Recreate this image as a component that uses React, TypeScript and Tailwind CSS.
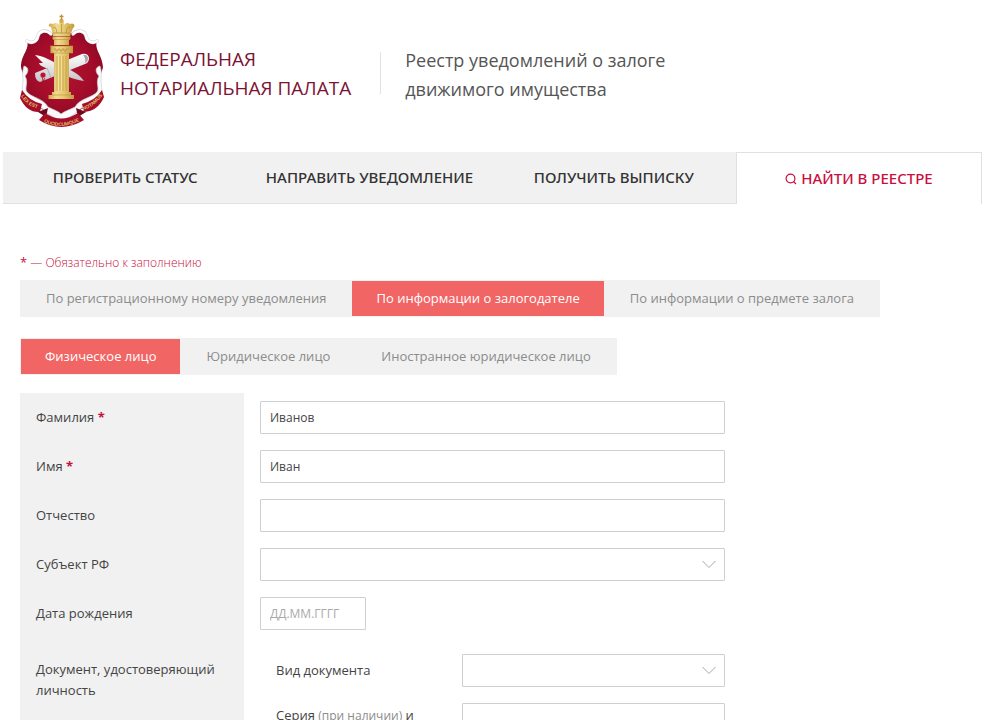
import React from "react";

function Emblem() {
  return (
    <svg viewBox="19 13 88 116" className="h-[116px] w-[88px] shrink-0" role="img" aria-label="Герб">
      <defs>
        <radialGradient id="field" cx="50%" cy="45%" r="60%">
          <stop offset="0" stopColor="#b3152f" />
          <stop offset="0.6" stopColor="#a30c2a" />
          <stop offset="1" stopColor="#850923" />
        </radialGradient>
        <linearGradient id="gold" x1="0" x2="1" y1="0" y2="0">
          <stop offset="0" stopColor="#cfa648" />
          <stop offset="0.3" stopColor="#f0dc90" />
          <stop offset="0.6" stopColor="#e5c96f" />
          <stop offset="1" stopColor="#c29840" />
        </linearGradient>
        <linearGradient id="silver" x1="0" x2="0" y1="0" y2="1">
          <stop offset="0" stopColor="#ffffff" />
          <stop offset="1" stopColor="#c4c4c8" />
        </linearGradient>
        <path id="ribbonLeft" d="M21 96 Q28 108 42 109" />
        <path id="ribbonMid" d="M42 121 Q61 132 83 119" />
        <path id="ribbonRight" d="M83 110 Q95 107 104 93" />
      </defs>
      <path
        d="M50 33 C44 29 38 31 37 36 C36 42 31 44 27 40 C30 50 21 54 21 67 C22 73 25 76 25 82 C26 88 23 92 24 97 C30 106 41 107 46 112 C52 118 56 119 61 119 C67 119 71 117 77 112 C83 107 94 105 100 96 C101 91 98 88 99 82 C99 76 102 73 103 67 C102 54 94 50 97 40 C94 45 88 43 87 36 C86 31 80 29 74 33 Z"
        fill="url(#field)"
      />
      <g fill="none" strokeLinecap="round">
        <path d="M51 34 C46 29 39 31 38 36 C37 42 31 44 27 41 M73 34 C78 29 85 31 86 36 C87 42 93 44 97 41" stroke="#cfcfd3" strokeWidth="3.400" />
        <path d="M51 34 C46 29 39 31 38 36 C37 42 31 44 27 41 M73 34 C78 29 85 31 86 36 C87 42 93 44 97 41" stroke="#fff" strokeWidth="2.400" />
      </g>
      <path
        d="M24 66 C29 67 29 72 25 76 C29 83 24 88 27 92 C32 98 43 98 48 107 C54 110 58 111 61 114 C65 111 69 110 75 107 C80 98 92 98 97 92 C100 88 95 83 99 76 C95 72 95 67 100 66 C102 72 101 76 101 82 C102 90 103 95 96 101 C88 106 82 106 77 112 C69 119 67 117 61 121 C56 117 53 119 46 112 C41 106 35 106 28 101 C21 95 22 90 23 82 C23 76 22 72 24 66 Z"
        fill="#fafafa"
        stroke="#cfcfd2"
        strokeWidth="0.7"
      />
      <path d="M35 55 C43 56 51 60 61 66 C72 70 79 74 84 81 C72 79 65 76 56 70 C47 69 39 66 39 63 L43 63 Z" fill="url(#silver)" />
      <path d="M35 73 L82 54 Q88 53 89 58 Q89 63 85 64 L40 82 Q35 81 35 73 Z" fill="url(#silver)" />
      <path d="M83 55 Q86 58 85 63 Q88 62 88 58 Q87 54 83 55" fill="#a5a5aa" />
      <path d="M47 68 L51 78" stroke="#a6a6ac" strokeWidth="0.8" />
      <path d="M42 76 L43 81 L45 78" fill="none" stroke="#a30c2a" strokeWidth="0.8" />
      <circle cx="43" cy="75" r="2.6" fill="#c41236" />
      <path d="M51 27 C47 26 49 22 53 24 C55 22 58 23 59 25 C59 22 60 21 61.500 20 C63 21 64 22 64 25 C65 23 68 22 70 24 C74 22 76 26 73 28 L70 36 H53 Z" fill="url(#gold)" />
      <circle cx="61.500" cy="21" r="2.200" fill="#d5ac48" />
      <path d="M61.500 14.500 V20 M59.500 16.500 H63.500" stroke="#bd933a" strokeWidth="1.400" />
      <path d="M53 28 Q56 25 57 33 M61.500 24 V33 M70 28 Q67 25 66 33 M53 33 H70" fill="none" stroke="#b0863a" strokeWidth="0.7" />
      <path d="M52.500 36.500 H70.500 V39 L69 40 V45 H54 V40 L52.500 39 Z" fill="url(#gold)" />
      <path d="M50.500 46 H73 V53 H69 V94 H54 V53 H50.500 Z" fill="url(#gold)" />
      <path d="M50 46 H73 M50.500 53 H73 M53 39.500 H70" stroke="#ba9040" strokeWidth="0.6" />
      <path d="M54 49 H56 V51 H58 V49 H60 V51 H62 V49 H64 V51 H66 V49 H69" fill="none" stroke="#b68b3a" strokeWidth="0.700" />
      <path d="M57 56 V91 M60 56 V91 M63 56 V91 M66 56 V91" stroke="#c79f4a" strokeWidth="0.800" />
      <path d="M58.500 56 V91 M61.500 56 V91" stroke="#f7e6a4" strokeWidth="0.700" />
      <path d="M52 92 H71 V95 H74 V99 H48.500 V95 H52 Z" fill="url(#gold)" />
      <path d="M52 95 H71" stroke="#ba9040" strokeWidth="0.6" />
      <path d="M22 90 Q29 101 42 104 L40 112 Q27 113 20 98 Z" fill="#a40e2b" />
      <path d="M102 90 Q96 100 82 104 L84 112 Q98 111 104 97 Z" fill="#a40e2b" />
      <path d="M38 112 L48 108 L46 117 Z M86 112 L76 108 L78 117 Z" fill="#6d091d" />
      <path d="M45 113 Q61 124 78 113 L84 120 Q61 134 39 120 Z" fill="#a40e2b" />
      <g fill="#e0ba60" fontFamily="Liberation Sans, sans-serif" fontWeight="700">
        <text fontSize="5"><textPath href="#ribbonLeft">LEX EST</textPath></text>
        <text fontSize="5"><textPath href="#ribbonMid" startOffset="2">QUODCUMQUE</textPath></text>
        <text fontSize="5"><textPath href="#ribbonRight">NOTAMUS</textPath></text>
      </g>
    </svg>
  );
}

function SearchIcon() {
  return (
    <svg viewBox="0 0 12 12" className="size-3 shrink-0" fill="none" stroke="#c8103e" strokeWidth="1.200" aria-hidden="true">
      <circle cx="5.500" cy="5.500" r="4.400" />
      <path d="M8.500 8.500 L11 11" />
    </svg>
  );
}

const box = "h-[33px] w-full rounded-[1px] border border-[#cfcfcf] bg-white px-[9px] text-[12px] text-[#444] outline-none placeholder:text-[#a9a9a9]";

function SelectBox({ id }: { id: string }) {
  return (
    <div className="relative">
      <select id={id} className={`${box} block appearance-none`} defaultValue="">
        <option value=""></option>
      </select>
      <svg viewBox="0 0 16 9" className="pointer-events-none absolute top-3 right-2 h-[9px] w-4" fill="none" stroke="#a8a8a8" aria-hidden="true">
        <path d="M1.500 1 L8 7.500 L14.500 1" />
      </svg>
    </div>
  );
}

function Tabs({ items, active }: { items: string[]; active: number }) {
  return (
    <div className="flex w-fit gap-px border border-[#f1f1f1] bg-[#f1f1f1]">
      {items.map((item, i) => (
        <button
          key={item}
          type="button"
          className={
            i === active
              ? "h-[35px] bg-[#f26565] px-6 text-[13px] whitespace-nowrap text-white"
              : "h-[35px] px-[25px] text-[13px] whitespace-nowrap text-[#8c8c8c]"
          }
        >
          {item}
        </button>
      ))}
    </div>
  );
}

function Row({ id, label, required, children }: { id: string; label: string; required?: boolean; children: React.ReactNode }) {
  return (
    <div className="grid grid-cols-[224px_1fr]">
      <label htmlFor={id} className="flex items-center bg-[#f1f1f1] px-4">
        <span>
          {label}
          {required && <b className="text-[#c8103e]"> *</b>}
        </span>
      </label>
      <div className="py-2 pl-4">{children}</div>
    </div>
  );
}

export default function App() {
  return (
    <div className="h-screen overflow-hidden bg-white font-['Open_Sans','Noto_Sans',sans-serif] text-[13px] leading-[21px] text-[#444]">
      <header className="flex h-[152px] items-start pt-[13px] pl-[19px]">
        <Emblem />
        <div className="mt-8 ml-[13px] text-[19px] leading-[29px] whitespace-nowrap text-[#7c1233]">
          ФЕДЕРАЛЬНАЯ
          <br />
          НОТАРИАЛЬНАЯ ПАЛАТА
        </div>
        <div className="mt-[39px] ml-[29px] h-[42px] w-px bg-[#e2e2e2]" />
        <h1 className="mt-[33px] ml-6 text-[18px] leading-[29px] whitespace-nowrap text-[#555]">
          Реестр уведомлений о залоге
          <br />
          движимого имущества
        </h1>
      </header>

      <nav className="mr-[18px] ml-[3px] grid h-[52px] grid-cols-[repeat(3,1fr)_246px] font-['Noto_Sans','Open_Sans',sans-serif] text-[15px] font-medium text-[#333]">
        {["ПРОВЕРИТЬ СТАТУС", "НАПРАВИТЬ УВЕДОМЛЕНИЕ", "ПОЛУЧИТЬ ВЫПИСКУ"].map((item) => (
          <a key={item} href="#" className="flex items-center justify-center border-b border-[#e0e0e0] bg-[#f1f1f1]">
            {item}
          </a>
        ))}
        <a href="#" className="flex items-center justify-center gap-1 border-x border-t border-[#e0e0e0] text-[#c8103e]">
          <SearchIcon />
          НАЙТИ В РЕЕСТРЕ
        </a>
      </nav>

      <main className="px-5 pt-12">
        <p className="text-[12px] font-light text-[#c8103e]">
          <b className="text-[13px]">*</b> — Обязательно к заполнению
        </p>
        <div className="mt-[7px] flex flex-col gap-[21px]">
          <Tabs items={["По регистрационному номеру уведомления", "По информации о залогодателе", "По информации о предмете залога"]} active={1} />
          <Tabs items={["Физическое лицо", "Юридическое лицо", "Иностранное юридическое лицо"]} active={0} />
        </div>

        <form className="mt-[18px] max-w-[705px]">
          <Row id="surname" label="Фамилия" required>
            <input id="surname" className={`${box} block`} defaultValue="Иванов" />
          </Row>
          <Row id="name" label="Имя" required>
            <input id="name" className={`${box} block`} defaultValue="Иван" />
          </Row>
          <Row id="patronymic" label="Отчество">
            <input id="patronymic" className={`${box} block`} />
          </Row>
          <Row id="region" label="Субъект РФ">
            <SelectBox id="region" />
          </Row>
          <Row id="birth" label="Дата рождения">
            <div className="w-[106px]">
              <input id="birth" className={`${box} block`} placeholder="ДД.ММ.ГГГГ" />
            </div>
          </Row>
          <div className="grid grid-cols-[224px_1fr]">
            <div className="bg-[#f1f1f1] px-4 pt-[21px] pb-20">Документ, удостоверяющий личность</div>
            <div className="grid grid-cols-[186px_1fr] content-start gap-y-4 pt-4 pl-8">
              <label htmlFor="doc" className="self-center">Вид документа</label>
              <SelectBox id="doc" />
              <label htmlFor="serial" className="pt-[2px]">
                Серия <span className="text-[12px] text-[#8c8c8c]">(при наличии)</span> и
              </label>
              <input id="serial" className={`${box} block`} />
            </div>
          </div>
        </form>
      </main>
    </div>
  );
}
